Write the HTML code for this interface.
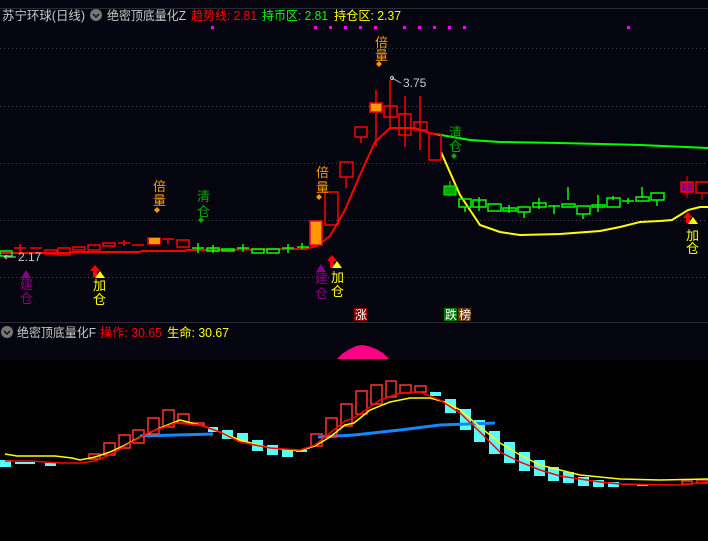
<!DOCTYPE html><html><head><meta charset="utf-8"><style>
html,body{margin:0;padding:0;background:#000;width:708px;height:541px;overflow:hidden}
svg{display:block}
text{font-family:"Liberation Sans","Noto Sans CJK SC",sans-serif}
</style></head><body>
<svg width="708" height="541" viewBox="0 0 708 541" xmlns="http://www.w3.org/2000/svg">
<rect x="0" y="0" width="708" height="322" fill="#05050f"/>
<rect x="0" y="322" width="708" height="38" fill="#05050f"/>
<rect x="0" y="360" width="708" height="181" fill="#000"/>
<line x1="0" y1="8.5" x2="708" y2="8.5" stroke="#2a2a33"/>
<line x1="0" y1="322.5" x2="708" y2="322.5" stroke="#2a2a33"/>
<g stroke="#444" stroke-dasharray="1,3">
<line x1="0" y1="48.5" x2="708" y2="48.5"/><line x1="0" y1="106.5" x2="708" y2="106.5"/>
<line x1="0" y1="163.5" x2="708" y2="163.5"/><line x1="0" y1="220.5" x2="708" y2="220.5"/>
<line x1="0" y1="277.5" x2="708" y2="277.5"/></g>
<!-- header -->
<g font-size="12.5">
<text x="2" y="20" fill="#c8c8c8" textLength="83" lengthAdjust="spacingAndGlyphs">苏宁环球(日线)</text>
<text x="107" y="20" fill="#c8c8c8" textLength="79" lengthAdjust="spacingAndGlyphs">绝密顶底量化Z</text>
<text x="191" y="20" fill="#f00" textLength="66" lengthAdjust="spacingAndGlyphs">趋势线: 2.81</text>
<text x="262" y="20" fill="#0f0" textLength="66" lengthAdjust="spacingAndGlyphs">持币区: 2.81</text>
<text x="334" y="20" fill="#ff0" textLength="67" lengthAdjust="spacingAndGlyphs">持仓区: 2.37</text>
</g>
<circle cx="96" cy="15" r="6" fill="#777"/><path d="M93 14l3 3 3-3" stroke="#111" fill="none" stroke-width="1.5"/>
<g fill="#f0f">
<rect x="211" y="26" width="3" height="3"/><rect x="314" y="26" width="3" height="3"/><rect x="329" y="26" width="3" height="3"/><rect x="344" y="26" width="3" height="3"/><rect x="359" y="26" width="3" height="3"/><rect x="374" y="26" width="3" height="3"/><rect x="403" y="26" width="3" height="3"/><rect x="418" y="26" width="3" height="3"/><rect x="433" y="26" width="3" height="3"/><rect x="448" y="26" width="3" height="3"/><rect x="463" y="26" width="3" height="3"/><rect x="627" y="26" width="3" height="3"/></g>
<!-- lines -->
<polyline fill="none" stroke="#f00" stroke-width="2" points="0,253 70,253 72,252 140,252 142,251 185,251 187,250 305,249 317,246 330,236 345,210 360,175 375,142 390,128 415,128 430,133 440,135"/>
<polyline fill="none" stroke="#0f0" stroke-width="2" points="435,134 470,140 500,142 560,143 640,145 708,148"/>
<polyline fill="none" stroke="#ff0" stroke-width="2" points="441,152 460,195 480,225 500,232 520,235 560,234 600,231 620,227 640,222 660,221 672,220 688,210 700,207 708,207"/>
<!-- early candles -->
<g stroke="#f00" fill="none" stroke-width="1.5">
<path d="M14 248h12M20 244v8M30 248h12M45 250h12v4h-12zM58 248h12v7h-12zM73 247h12v3h-12zM88 245h12v5h-12zM103 243h12v3h-12zM118 243h12M124 240v6M132 245h12M162 239h12M168 239v5M177 240h12v7h-12zM148 238h12v6h-12z"/>
</g>
<rect x="149" y="238" width="11" height="6" fill="#f90"/>
<g stroke="#0f0" fill="none" stroke-width="1.5">
<path d="M0 251h12v5h-12zM192 248h12M198 243v10M207 248h12v3h-12zM213 245v8M222 249h12v2h-12zM237 248h12M243 244v8M252 249h12v4h-12zM267 249h12v4h-12zM282 248h12M288 244v9M297 247h12M302 243v6"/>
</g>
<!-- rally candles -->
<rect x="310" y="221" width="12" height="24" fill="#f90" stroke="#f03" stroke-width="1.5"/>
<g stroke="#f00" fill="none" stroke-width="1.5">
<path d="M325 192h13v33h-13zM340 162h13v15h-13zM346 177v11M355 127h12v10h-12zM361 137v6M376 90v57M384 106h13v11h-13zM390 80v50M399 114h12v21h-12zM405 96v51M414 122h13v8h-13zM420 96v54M429 134h12v26h-12z"/>
</g>
<rect x="370" y="103" width="12" height="9" fill="#f90" stroke="#f00" stroke-width="1.5"/>
<!-- green candles -->
<rect x="444" y="186" width="12" height="9" fill="#0a0" stroke="#0f0"/><line x1="450" y1="181" x2="450" y2="186" stroke="#0f0"/>
<g stroke="#0f0" fill="none" stroke-width="1.5">
<path d="M459 199h12v8h-12zM465 207v5M473 200h13v7h-13zM479 197v14M488 204h13v7h-13zM503 208h13v3h-13zM509 205v8M518 207h12v5h-12zM524 212v6M533 203h13v4h-13zM539 198v11M548 206h12M554 205v9M562 204h13v3h-13zM568 187v13M577 206h13v8h-13zM583 214v5M592 205h13v2h-13zM598 195v17M607 198h13v9h-13zM613 196v4M622 201h12M628 198v6M636 197h13v4h-13zM642 187v11M651 193h13v7h-13zM657 200v6"/>
</g>
<rect x="681" y="182" width="12" height="10" fill="#808" stroke="#f00" stroke-width="1.5"/><line x1="687" y1="176" x2="687" y2="198" stroke="#f00"/>
<rect x="696" y="182" width="13" height="11" fill="none" stroke="#f00" stroke-width="1.5"/><line x1="702" y1="193" x2="702" y2="200" stroke="#f00"/>
<!-- labels -->
<g font-size="13">
<text x="153" y="191" fill="#f90">倍</text><text x="153" y="205" fill="#f90">量</text>
<text x="197" y="201" fill="#0a0">清</text><text x="197" y="216" fill="#0a0">仓</text>
<text x="316" y="177" fill="#f90">倍</text><text x="316" y="192" fill="#f90">量</text>
<text x="375" y="47" fill="#f90">倍</text><text x="375" y="60" fill="#f90">量</text>
<text x="449" y="137" fill="#0a0">清</text><text x="449" y="151" fill="#0a0">仓</text>
<text x="20" y="289" fill="#808">建</text><text x="20" y="303" fill="#808">仓</text>
<text x="93" y="290" fill="#ff0">加</text><text x="93" y="304" fill="#ff0">仓</text>
<text x="315" y="283" fill="#808">建</text><text x="315" y="298" fill="#808">仓</text>
<text x="331" y="282" fill="#ff0">加</text><text x="331" y="296" fill="#ff0">仓</text>
<text x="686" y="240" fill="#ff0">加</text><text x="686" y="253" fill="#ff0">仓</text>
</g>
<g fill="#f90"><path d="M157 207l3 3-3 3-3-3z"/><path d="M319 194l3 3-3 3-3-3z"/><path d="M379 61l3 3-3 3-3-3z"/></g>
<g fill="#0a0"><path d="M201 217l3 3-3 3-3-3z"/><path d="M454 153l3 3-3 3-3-3z"/></g>
<path d="M26 270l5 8h-10z" fill="#808"/><path d="M321 264l5 8h-10z" fill="#808"/>
<path d="M95 265l5 6h-3v6h-4v-6h-3z" fill="#f00"/><path d="M100 271l5 7h-10z" fill="#ff0"/>
<path d="M332 255l5 6h-3v7h-4v-7h-3z" fill="#f00"/><path d="M337 261l5 7h-10z" fill="#ff0"/>
<path d="M688 212l5 6h-3v5h-4v-5h-3z" fill="#f00"/><path d="M693 217l5 7h-10z" fill="#ff0"/>
<text x="403" y="87" font-size="12" fill="#ccc">3.75</text><path d="M392 78l9 5" stroke="#ccc"/><circle cx="392" cy="78" r="1.5" fill="none" stroke="#ccc"/>
<text x="18" y="261" font-size="12" fill="#ccc">2.17</text><path d="M4 257h12M4 257l3-2M4 257l3 2" stroke="#ccc"/>
<rect x="354" y="308" width="13" height="13" fill="#800"/><text x="355" y="319" font-size="12" fill="#fff">涨</text>
<rect x="444" y="308" width="13" height="13" fill="#070"/><text x="445" y="319" font-size="12" fill="#fff">跌</text>
<rect x="458" y="308" width="13" height="13" fill="#630"/><text x="459" y="319" font-size="12" fill="#fff">榜</text>
<!-- lower header -->
<circle cx="7" cy="332" r="6" fill="#777"/><path d="M4 331l3 3 3-3" stroke="#111" fill="none" stroke-width="1.5"/>
<g font-size="12.5">
<text x="17" y="337" fill="#c8c8c8" textLength="79" lengthAdjust="spacingAndGlyphs">绝密顶底量化F</text>
<text x="100" y="337" fill="#f00" textLength="62" lengthAdjust="spacingAndGlyphs">操作: 30.65</text>
<text x="167" y="337" fill="#ff0" textLength="62" lengthAdjust="spacingAndGlyphs">生命: 30.67</text>
</g>
<path d="M337 359L342 354L348 350L356 346L362 345L368 346L376 349L383 353L389 359z" fill="#f08"/>
<!-- lower cyan bars -->
<g fill="#5ff">
<rect x="0" y="460" width="11" height="7"/><rect x="15" y="462" width="20" height="2"/><rect x="45" y="463" width="11" height="3"/>
<rect x="208" y="427" width="10" height="5"/><rect x="222" y="430" width="11" height="9"/><rect x="237" y="433" width="11" height="9"/><rect x="252" y="440" width="11" height="11"/><rect x="267" y="445" width="11" height="10"/><rect x="282" y="449" width="11" height="8"/><rect x="296" y="450" width="11" height="2"/>
<rect x="430" y="392" width="11" height="4"/><rect x="445" y="399" width="11" height="14"/><rect x="460" y="409" width="11" height="21"/><rect x="474" y="420" width="11" height="22"/><rect x="489" y="431" width="11" height="23"/><rect x="504" y="442" width="11" height="21"/><rect x="519" y="452" width="11" height="19"/><rect x="534" y="460" width="11" height="16"/><rect x="548" y="467" width="11" height="14"/><rect x="563" y="472" width="11" height="11"/><rect x="578" y="477" width="11" height="9"/><rect x="593" y="480" width="11" height="7"/><rect x="608" y="482" width="11" height="5"/><rect x="623" y="484" width="11" height="1"/><rect x="637" y="485" width="11" height="1"/>
</g>
<g stroke="#18f" stroke-width="3" fill="none"><polyline points="140,436 213,434"/><polyline points="318,437 354,435 400,430 440,425 495,423"/></g>
<g stroke="#f33" fill="none" stroke-width="1.5">
<path d="M89 454h11v5h-11zM104 443h11v12h-11zM119 435h11v13h-11zM133 430h11v13h-11zM148 418h11v16h-11zM163 410h11v17h-11zM178 414h11v9h-11zM193 423h11v2h-11zM311 434h11v12h-11zM326 418h11v19h-11zM341 404h11v22h-11zM356 391h11v23h-11zM371 385h11v19h-11zM386 381h10v16h-10zM400 385h11v8h-11zM415 386h11v6h-11zM682 481h10v3h-10zM697 480h10v3h-10z"/>
</g>
<polyline fill="none" stroke="#ff0" stroke-width="1.5" points="5,454 17,456 55,456 72,458 80,460 95,457 110,452 125,445 140,437 160,428 180,420 200,425 215,430 240,440 270,448 300,451 315,446 330,437 345,425 354,423 370,410 390,402 410,398 430,398 445,402 460,410 480,427 500,443 520,455 540,465 560,470 580,475 620,479 660,480 708,479"/>
<polyline fill="none" stroke="#f00" stroke-width="1.5" points="5,461 30,461 60,463 80,463 95,461 110,455 130,443 150,432 165,427 175,423 200,425 220,432 240,442 270,448 300,450 315,445 330,433 345,421 354,418 380,400 400,393 420,392 440,400 460,413 480,432 500,452 520,462 540,470 560,476 580,479 600,482 620,484 680,485 708,482"/>
</svg>
</body></html>
